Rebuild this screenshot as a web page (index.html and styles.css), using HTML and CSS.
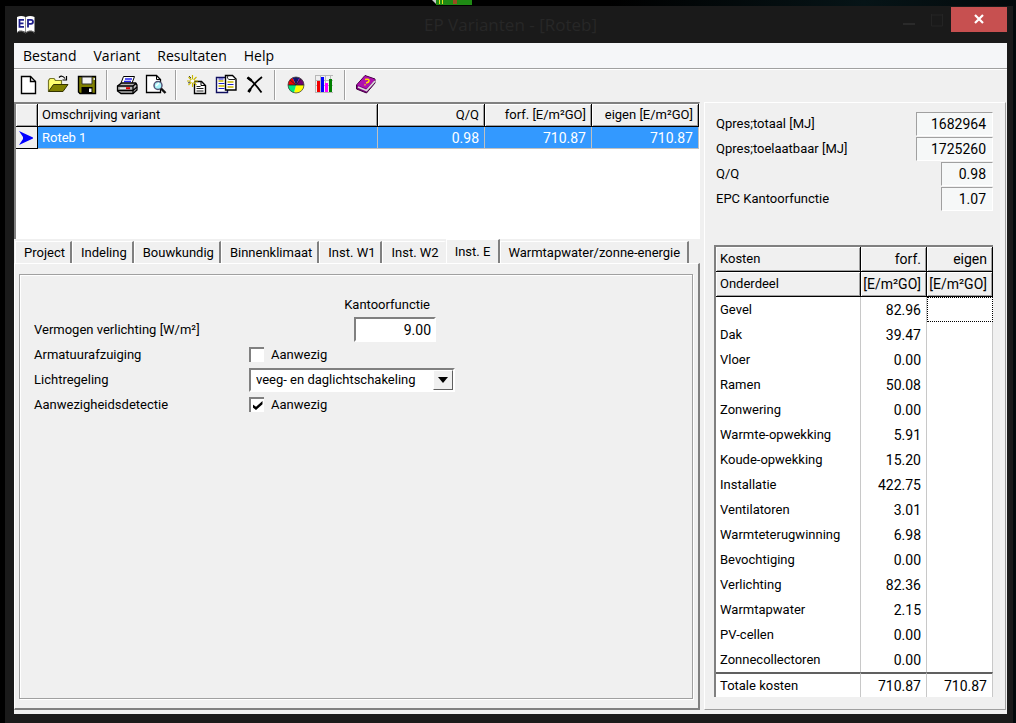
FILE: index.html
```html
<!DOCTYPE html>
<html lang="nl">
<head>
<meta charset="utf-8">
<meta name="viewport" content="width=device-width, initial-scale=1">
<title>EP Varianten - [Roteb]</title>
<link rel="stylesheet" href="styles.css">
</head>
<body>
<div class="desktop">
  <svg class="desktop-badge" width="40" height="6" viewBox="0 0 40 6" aria-hidden="true">
    <path d="M0 0h8v4H4z" fill="#c8ccc8"/><path d="M4 0h36v5H4z" fill="#1f8a14"/><path d="M7 0h1v4H7zM10 0h1v4h-1z" fill="#e8e020"/><path d="M21 0h4v4h-4z" fill="#9a4a20"/>
  </svg>
  <div class="window">
    <header class="titlebar">
      <svg class="app-icon" width="20" height="20" viewBox="0 0 20 20" aria-hidden="true">
        <path d="M1 2q4-2 8.500 0v15q-4-2-8.500 0zM10 2q4-2 8.500 0v15q-4-2-8.500 0z" fill="#fff"/>
        <path d="M8 4.800H3.500v7H8M3.500 8.300h4M12 12.500V4.800h3q2 0 2 2t-2 2h-3" fill="none" stroke="#20208c" stroke-width="1.800"/>
        <path d="M1 18l2-2 3 0 3.500 2 3.500-2 3 0 2.500 2" fill="none" stroke="#666"/>
      </svg>
      <h1 class="title">EP Varianten - [Roteb]</h1>
      <div class="window-buttons">
        <button class="win-btn" type="button" aria-label="Minimaliseren"><svg width="14" height="14" viewBox="0 0 14 14"><path d="M1 11h12" stroke="#2a2a2a" stroke-width="2"/></svg></button>
        <button class="win-btn" type="button" aria-label="Maximaliseren"><svg width="14" height="14" viewBox="0 0 14 14"><path d="M1 2h12M1.500 1v12h11V1" fill="none" stroke="#242424" stroke-width="1"/></svg></button>
        <button class="win-btn win-close" type="button" aria-label="Sluiten"><svg width="12" height="10" viewBox="0 0 12 10"><path d="M2 1l8 8M10 1L2 9" stroke="#fff" stroke-width="2.200"/></svg></button>
      </div>
    </header>

    <div class="client">
      <nav class="menubar" aria-label="Menu">
        <button class="menu-item" type="button">Bestand</button>
        <button class="menu-item" type="button">Variant</button>
        <button class="menu-item" type="button">Resultaten</button>
        <button class="menu-item" type="button">Help</button>
      </nav>

      <div class="toolbar" role="toolbar" aria-label="Werkbalk">
        <button class="tool" type="button" aria-label="Nieuw"><svg class="icon" viewBox="0 0 22 22"><path d="M3.500 2.500h9l5 5v12h-14z" fill="#fff" stroke="#000" stroke-width="1.400"/><path d="M12.500 2.500v5h5" fill="none" stroke="#000" stroke-width="1.400"/></svg></button>
        <button class="tool" type="button" aria-label="Openen"><svg class="icon" viewBox="0 0 22 22"><path d="M1.500 17.500V6.500l1.500-2h4l1.500 2h6v4" fill="#ffff70" stroke="#77772a" stroke-width="1.200"/><path d="M1.500 17.500l5-7h14.500l-5 7z" fill="#808000" stroke="#333300"/><path d="M12 3.500q3-3 6 1M19.500 2v4h-4" fill="none" stroke="#000" stroke-width="1.200"/></svg></button>
        <button class="tool" type="button" aria-label="Opslaan"><svg class="icon" viewBox="0 0 22 22"><path d="M2.500 2.500h17v17H4l-1.500-1.500z" fill="#808000" stroke="#000" stroke-width="1.400"/><path d="M6 3h10v7H6z" fill="#f4f4f4" stroke="#333"/><path d="M5.500 13h11v6h-11z" fill="#000"/><path d="M13 14.500h2.500v3.500H13z" fill="#fff"/><path d="M17.500 4h1.500v2h-1.500z" fill="#ddd"/></svg></button>
        <span class="separator"></span>
        <button class="tool" type="button" aria-label="Afdrukken"><svg class="icon" viewBox="0 0 22 22"><path d="M7.500 2.500h11l-3 8h-11z" fill="#fff" stroke="#000"/><path d="M9 5h7M8 7.500h7" stroke="#2222f0" stroke-width="1.300"/><path d="M1.500 12l4-3h14l1.500 2v5l-4 3.500H5L1.500 17z" fill="#b4b4b4" stroke="#000" stroke-width="1.300"/><path d="M1.500 12h15.500l3.500-3M1.500 16.500H17l4-3.500M17 12v7.500" fill="none" stroke="#000" stroke-width="1.300"/><path d="M4 14.200h8" stroke="#fff"/><path d="M10 14.200h4" stroke="#e00000" stroke-width="2"/></svg></button>
        <button class="tool" type="button" aria-label="Afdrukvoorbeeld"><svg class="icon" viewBox="0 0 22 22"><path d="M1.500 1.500h10l4 4v13h-14z" fill="#fff" stroke="#000" stroke-width="1.300"/><path d="M11.500 1.500v4h4" fill="none" stroke="#000"/><circle cx="13" cy="11.500" r="4" fill="#a8f4fa" stroke="#557" stroke-width="1.500"/><path d="M11 12l3-3" stroke="#fff" stroke-width="1.500"/><path d="M16 14.500l4.500 4.500" stroke="#111" stroke-width="2.400"/></svg></button>
        <span class="separator"></span>
        <button class="tool" type="button" aria-label="Nieuwe variant"><svg class="icon" viewBox="0 0 22 22"><path d="M8.500 7.500h7l4 4v8h-11z" fill="#fff" stroke="#000" stroke-width="1.400"/><path d="M15 7.500v4h4" fill="none" stroke="#000"/><path d="M10.500 12.500h4M10.500 14.500h7M10.500 17h7" stroke="#222"/><path d="M6.500 1v12M1 7h11M2.500 3l8 8M10.500 3l-8 8" stroke="#c8b800" stroke-width="1.100"/><circle cx="6.500" cy="7" r="1.800" fill="#fff"/><path d="M3 2l2 2M2 9l2-1" stroke="#444"/></svg></button>
        <button class="tool" type="button" aria-label="Kopi&euml;ren"><svg class="icon" viewBox="0 0 22 22"><path d="M1.500 3.500h11v15h-11z" fill="#fff" stroke="#101060" stroke-width="1.400"/><path d="M10.500 1.500h7l3.500 3.500v11H10.500z" fill="#fff" stroke="#000" stroke-width="1.400"/><path d="M13 1.500q-2 3 1 4h6" fill="none" stroke="#222"/><path d="M3.500 7h5M3.500 12h6M12.500 8h6M12.500 13h6" stroke="#c8b800" stroke-width="1.300"/><path d="M3.500 9.500h6M3.500 14.500h6M12.500 10.500h6M3.500 5h5" stroke="#2222c8" stroke-width="1.200"/></svg></button>
        <button class="tool" type="button" aria-label="Verwijderen"><svg class="icon" viewBox="0 0 22 22"><path d="M3.500 3.500Q10 8 17.500 18.500M18 3Q10 9 4.500 18" fill="none" stroke="#000" stroke-width="1.800"/><path d="M3.500 3.500l4 3M4.500 18l2-3" stroke="#000" stroke-width="2.800"/></svg></button>
        <span class="separator"></span>
        <button class="tool" type="button" aria-label="Cirkeldiagram"><svg class="icon" viewBox="0 0 22 22"><path d="M11 11H3a8 8 0 0 1 4.500-7.200z" fill="#f00000"/><path d="M11 11L7.500 3.800a8 8 0 0 1 7 0z" fill="#101080"/><path d="M11 11l3.500-7.200A8 8 0 0 1 19 11z" fill="#700070"/><path d="M11 11h8a8 8 0 0 1-10 7.800z" fill="#ffff00"/><path d="M11 11l-2 7.800A8 8 0 0 1 3 11z" fill="#00e87a"/><path d="M11 3v8M11 11L5 6M11 11l5-6M3 11h16" stroke="#222" stroke-width=".8"/><circle cx="11" cy="11" r="8" fill="none" stroke="#444" stroke-width=".8"/></svg></button>
        <button class="tool" type="button" aria-label="Staafdiagram"><svg class="icon" viewBox="0 0 22 22"><path d="M1 1.500h18M1 6.500h18M1 11.500h18M1 18.500h18M1.500 1v18M6.500 1v18M11.500 1v18M16.500 1v18" stroke="#b8b8b8"/><path d="M3 7h3v11H3z" fill="#f00000"/><path d="M7 3h3v15H7z" fill="#0000ff"/><path d="M11 9h3v9h-3z" fill="#ff00ff"/><path d="M15 5h3v13h-3z" fill="#008000"/></svg></button>
        <span class="separator"></span>
        <button class="tool" type="button" aria-label="Help"><svg class="icon" viewBox="0 0 22 22"><path d="M1.500 11L10 1.500l10 3.500v4L11.500 19 1.500 15z" fill="#800080" stroke="#400040"/><path d="M2 11L10 2l10 3.500-8.500 9z" fill="#b010b0"/><path d="M3 13l8.500 3.500L20 7" fill="none" stroke="#d8d8d8" stroke-width="1.800"/><path d="M10 5.500q4-1 4 1t-3 2.500M9.500 10.500l1 .5" fill="none" stroke="#ffe000" stroke-width="1.500"/></svg></button>
      </div>

      <main class="workspace">
        <section class="left">
          <div class="variants">
            <table class="variant-table">
              <colgroup><col class="col-mark"><col><col class="col-num"><col class="col-num"><col class="col-num"></colgroup>
              <thead><tr><th aria-label="Selectie"></th><th class="text">Omschrijving variant</th><th>Q/Q</th><th>forf. [E/m²GO]</th><th>eigen [E/m²GO]</th></tr></thead>
              <tbody><tr><td class="mark"><svg width="16" height="14" viewBox="0 0 16 14" aria-hidden="true"><path d="M1 0l14 6.500v1L1 14l4-6v-2z" fill="#0000ff"/></svg></td><td class="text">Roteb 1</td><td>0.98</td><td>710.87</td><td>710.87</td></tr></tbody>
            </table>
          </div>

          <div class="tabs" role="tablist">
            <button class="tab" type="button" role="tab">Project</button>
            <button class="tab" type="button" role="tab">Indeling</button>
            <button class="tab" type="button" role="tab">Bouwkundig</button>
            <button class="tab" type="button" role="tab">Binnenklimaat</button>
            <button class="tab" type="button" role="tab">Inst. W1</button>
            <button class="tab tab-before" type="button" role="tab">Inst. W2</button>
            <button class="tab tab-active" type="button" role="tab" aria-selected="true">Inst. E</button>
            <button class="tab" type="button" role="tab">Warmtapwater/zonne-energie</button>
          </div>

          <div class="tab-page" role="tabpanel">
            <form class="fields">
              <span class="column-title">Kantoorfunctie</span>
              <label for="power">Vermogen verlichting [W/m²]</label>
              <input class="number" id="power" type="text" value="9.00">
              <span>Armatuurafzuiging</span>
              <label class="check"><input class="box" type="checkbox">Aanwezig</label>
              <label for="control">Lichtregeling</label>
              <span class="combo">
                <select class="select" id="control"><option>veeg- en daglichtschakeling</option></select>
                <span class="drop"><svg width="10" height="6" viewBox="0 0 10 6" aria-hidden="true"><path d="M0 0h10L5 6z"/></svg></span>
              </span>
              <span>Aanwezigheidsdetectie</span>
              <label class="check"><input class="box" type="checkbox" checked>Aanwezig</label>
            </form>
          </div>
        </section>

        <aside class="summary">
          <dl class="totals">
            <div class="total"><dt>Qpres;totaal [MJ]</dt><dd class="wide">1682964</dd></div>
            <div class="total"><dt>Qpres;toelaatbaar [MJ]</dt><dd class="wide">1725260</dd></div>
            <div class="total"><dt>Q/Q</dt><dd>0.98</dd></div>
            <div class="total"><dt>EPC Kantoorfunctie</dt><dd>1.07</dd></div>
          </dl>
          <table class="costs">
            <colgroup><col><col class="col-cost"><col class="col-cost"></colgroup>
            <thead>
              <tr><th class="text">Kosten</th><th>forf.</th><th>eigen</th></tr>
              <tr><th class="text">Onderdeel</th><th>[E/m²GO]</th><th>[E/m²GO]</th></tr>
            </thead>
            <tbody>
              <tr><td class="text">Gevel</td><td>82.96</td><td class="focus"></td></tr>
              <tr><td class="text">Dak</td><td>39.47</td><td></td></tr>
              <tr><td class="text">Vloer</td><td>0.00</td><td></td></tr>
              <tr><td class="text">Ramen</td><td>50.08</td><td></td></tr>
              <tr><td class="text">Zonwering</td><td>0.00</td><td></td></tr>
              <tr><td class="text">Warmte-opwekking</td><td>5.91</td><td></td></tr>
              <tr><td class="text">Koude-opwekking</td><td>15.20</td><td></td></tr>
              <tr><td class="text">Installatie</td><td>422.75</td><td></td></tr>
              <tr><td class="text">Ventilatoren</td><td>3.01</td><td></td></tr>
              <tr><td class="text">Warmteterugwinning</td><td>6.98</td><td></td></tr>
              <tr><td class="text">Bevochtiging</td><td>0.00</td><td></td></tr>
              <tr><td class="text">Verlichting</td><td>82.36</td><td></td></tr>
              <tr><td class="text">Warmtapwater</td><td>2.15</td><td></td></tr>
              <tr><td class="text">PV-cellen</td><td>0.00</td><td></td></tr>
              <tr><td class="text">Zonnecollectoren</td><td>0.00</td><td></td></tr>
            </tbody>
            <tfoot><tr><td class="text">Totale kosten</td><td>710.87</td><td>710.87</td></tr></tfoot>
          </table>
        </aside>
      </main>
    </div>
  </div>
</div>
</body>
</html>
```
FILE: styles.css
```css
*, *::before, *::after { box-sizing: border-box; }

body {
  margin: 0;
  background: #000;
  color: #000;
  font: 13px/20px Roboto, "Liberation Sans", sans-serif;
}

button, input, select { font: inherit; color: inherit; margin: 0; padding: 0; border: 0; border-radius: 0; }
button { background: none; }
svg { display: block; }

.desktop {
  position: relative;
  display: flex;
  min-height: 100vh;
  padding: 6px 3px 0 5px;
  background: linear-gradient(90deg, #000 60%, #061417 85%, #03090b);
}

.desktop-badge { position: absolute; top: 0; left: 432px; }

.window {
  flex: 1;
  display: flex;
  flex-direction: column;
  padding: 0 6px 9px 9px;
  background: #1a1a1a;
}

.titlebar {
  display: grid;
  grid-template-columns: 1fr auto 1fr;
  align-items: center;
  height: 37px;
}
.app-icon { margin-left: 2px; }
.title { margin: 0; color: #272727; font: 400 17px/24px "Open Sans", sans-serif; }
.window-buttons { display: flex; justify-self: end; align-self: start; padding-top: 1px; }
.win-btn { display: grid; place-items: center; width: 28px; height: 25px; }
.win-close { width: 56px; background: #c75050; padding-bottom: 2px; }

.client { flex: 1; display: flex; flex-direction: column; background: #f0f0f0; }

.menubar {
  display: flex;
  height: 25px;
  background: #f5f6f8;
}
.menu-item { padding: 0 8px 0 9px; font: 14px/24px "Open Sans", sans-serif; }
.menu-item:hover { background: #d5e7f8; }

.toolbar {
  display: flex;
  align-items: center;
  height: 34px;
  padding-bottom: 2px;
  border-top: 1px solid #a0a0a0;
  box-shadow: inset 0 1px #fff;
}
.tool { display: grid; place-items: center; width: 29px; height: 28px; }
.icon { width: 22px; height: 22px; }
.separator {
  width: 2px;
  height: 30px;
  margin: 0 4px 0 5px;
  border-left: 1px solid #a0a0a0;
  border-right: 1px solid #fff;
}
.separator ~ .separator { margin-right: 5px; }

.workspace {
  flex: 1;
  display: grid;
  grid-template-columns: minmax(0, 1fr) 302px;
  column-gap: 4px;
  padding: 0 1px 4px 0;
}
.left { display: flex; flex-direction: column; }

.variants {
  height: 137px;
  background: #fff;
  border: solid #808080;
  border-width: 2px 0 0 2px;
  border-right: 1px solid #fff;
}
table { width: 100%; table-layout: fixed; border-collapse: separate; border-spacing: 0; }
th, td { padding: 0 5px 0 2px; font-weight: 400; text-align: right; white-space: nowrap; }
td { font-size: 14px; }
th.text, td.text { padding: 0 0 0 4px; text-align: left; font-size: 13px; }
th {
  background: #f0f0f0;
  border-right: 1px solid #000;
  border-bottom: 1px solid #000;
  box-shadow: inset 1px 1px #fff, inset -1px -1px #a0a0a0;
}
.col-mark { width: 22px; }
.col-num { width: 107px; }
.variant-table th { height: 23px; }
.variant-table td {
  height: 22px;
  background: #3399ff;
  color: #fff;
  border-right: 1px solid #c0c0c0;
  border-bottom: 1px solid #c0c0c0;
}
.variant-table td.mark {
  padding: 0 2px;
  background: #f0f0f0;
  border-color: #000;
}

.tabs { display: flex; align-items: flex-end; height: 24px; padding-left: 1px; }
.tab {
  height: 22px;
  padding: 0 5px 0 8px;
  line-height: 20px;
  border: solid #fff;
  border-width: 1px 0 0 1px;
  border-right: 2px solid #808080;
  white-space: nowrap;
}
.tab-before { border-right-color: #f0f0f0; }
.tab-active { height: 24px; padding: 0 8px; }
.tab:last-child { padding: 0 7px; }

.tab-page {
  flex: 1;
  padding: 10px 5px 9px 4px;
  border: 1px solid #fff;
  border-right: 2px solid #808080;
  border-bottom: 2px solid #808080;
}
.fields {
  display: grid;
  grid-template-columns: 215px 187px;
  grid-auto-rows: 25px;
  align-items: center;
  height: 100%;
  align-content: start;
  padding: 17px 0 0 14px;
  border: 1px solid #a0a0a0;
  box-shadow: inset 1px 1px #fff, 1px 1px #fff;
}
.column-title { grid-column: 2; justify-self: end; padding-right: 6px; }
.number {
  justify-self: end;
  width: 82px;
  height: 25px;
  padding-right: 3px;
  font-size: 14px;
  text-align: right;
  background: #fff;
  border: 2px solid;
  border-color: #808080 #fff #fff #808080;
}
.check { display: flex; align-items: center; gap: 7px; }
.box {
  appearance: none;
  display: grid;
  place-items: center;
  width: 15px;
  height: 15px;
  background: #fff;
  border: solid #808080;
  border-width: 2px 0 0 2px;
}
.box:checked::before {
  content: "";
  width: 10px;
  height: 9px;
  background: #000;
  clip-path: polygon(0 35%, 35% 65%, 100% 0, 100% 35%, 35% 100%, 0 70%);
}
.combo { position: relative; width: 206px; height: 24px; }
.select {
  appearance: none;
  width: 100%;
  height: 24px;
  padding: 0 22px 0 5px;
  background: #fff;
  border: 2px solid;
  border-color: #808080 #fff #fff #808080;
}
.drop {
  position: absolute;
  inset: 2px 2px 2px auto;
  display: grid;
  place-items: center;
  width: 20px;
  background: #f0f0f0;
  border: 1px solid;
  border-color: #fff #606060 #606060 #fff;
  pointer-events: none;
}

.summary {
  padding: 8px 12px 11px 9px;
  border: 1px solid;
  border-color: #fff #a0a0a0 #a0a0a0 #fff;
}
.totals { margin: 0 0 34px; }
.total { display: flex; align-items: center; justify-content: space-between; height: 25px; padding-left: 2px; }
dd {
  width: 52px;
  height: 24px;
  margin: 0;
  padding-right: 6px;
  font-size: 14px;
  line-height: 22px;
  text-align: right;
  background: #f6f8f8;
  border: 1px solid;
  border-color: #a0a0a0 #fff #fff #a0a0a0;
}
dd.wide { width: 77px; }

.costs {
  background: #fff;
  border: solid #808080;
  border-width: 2px 0 0 2px;
}
.col-cost { width: 66px; }
.costs th, .costs td { height: 25px; }
.costs th:not(.text) { font-size: 14px; }
.costs td { border-right: 1px solid #c8c8c8; }
.costs .focus { border: 1px dotted #000; }
.costs tfoot td { border-top: 2px solid #606060; }
```
